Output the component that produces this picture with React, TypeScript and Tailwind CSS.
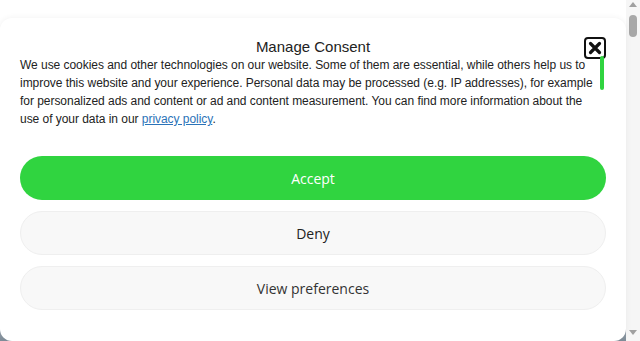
import React from "react";

function CloseIcon() {
  return (
    <svg width="22" height="22" viewBox="0 0 22 22" fill="none">
      <rect x="1" y="1" width="20" height="20" rx="3" stroke="#111" strokeWidth="2" />
      <path d="M6.5 6.5 L15.5 15.5 M15.5 6.5 L6.5 15.5" stroke="#111" strokeWidth="3.2" strokeLinecap="round" />
    </svg>
  );
}

export default function App() {
  return (
    <div className="flex h-[341px] w-[640px] overflow-hidden bg-white">
      <div className="flex w-[626px] flex-col bg-[linear-gradient(to_bottom,#ffffff_0%,#ffffff_90%,#9aa3ad_96%,#7f8d99_100%)] pt-[18px]">
        <div className="relative flex flex-1 flex-col rounded-[12px] bg-white px-5 pt-[20px] shadow-[0_0_6px_rgba(0,0,0,0.06)]">
          <button className="absolute right-[20px] top-[19px]">
            <CloseIcon />
          </button>
          <div className="absolute right-[22px] top-[38px] h-[34px] w-[4px] rounded-full bg-[#30d440]" />
          <h2 className="text-center font-['Liberation_Sans',sans-serif] text-[15px] leading-[18px] text-[#222]">
            Manage Consent
          </h2>
          <p className="w-[578px] font-['Liberation_Sans',sans-serif] text-[12px] leading-[18px] tracking-[-0.04px] text-[#222]">
            We use cookies and other technologies on our website. Some of them are essential, while others help us to
            improve this website and your experience. Personal data may be processed (e.g. IP addresses), for example
            for personalized ads and content or ad and content measurement. You can find more information about the
            use of your data in our{" "}
            <a href="#" className="text-[#2b73b8] underline">
              privacy policy
            </a>
            .
          </p>
          <div className="mt-[28px] flex flex-col gap-[11px] font-['Open_Sans',sans-serif] text-[14px]">
            <button className="h-[44px] w-full rounded-full bg-[#30d440] text-white">Accept</button>
            <button className="h-[44px] w-full rounded-full border border-[#efefef] bg-[#f8f8f8] text-[#222]">
              Deny
            </button>
            <button className="h-[44px] w-full rounded-full border border-[#efefef] bg-[#f8f8f8] text-[#333]">
              View preferences
            </button>
          </div>
        </div>
      </div>
      <div className="flex w-[14px] flex-col items-center bg-[#f6f6f6] py-[2px]">
        <div className="h-0 w-0 border-x-[4px] border-b-[5px] border-x-transparent border-b-[#a0a0a0]" />
        <div className="mt-[8px] h-[22px] w-[8px] rounded-full bg-[#a8a8a8]" />
        <div className="flex-1" />
        <div className="mb-[4px] h-0 w-0 border-x-[4px] border-t-[5px] border-x-transparent border-t-[#a0a0a0]" />
      </div>
    </div>
  );
}
